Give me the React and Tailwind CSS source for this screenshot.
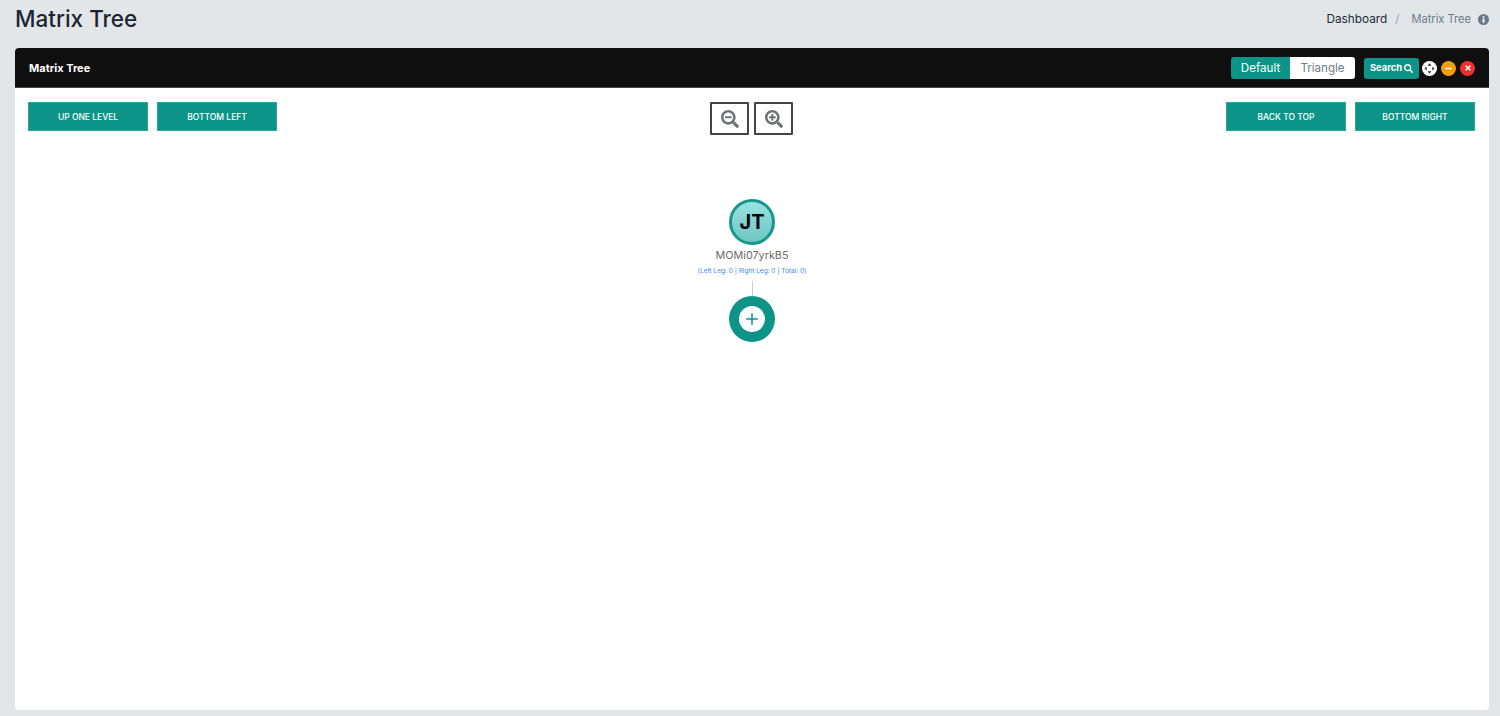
import { FaSearch, FaSearchMinus, FaSearchPlus, FaTimes, FaMinus } from "react-icons/fa";
import { Plus } from "lucide-react";

const font = "font-['Inter','Noto_Sans',sans-serif]";

function ActionButton({ label }) {
  return (
    <button className="flex h-[29px] w-[120px] items-center justify-center border border-[#2ba797] bg-[#0d9488] pt-[1px] text-[8.5px] font-medium text-white">
      {label}
    </button>
  );
}

function ZoomButton({ children }) {
  return (
    <button className="flex h-[33px] w-[39px] items-center justify-center rounded-[1px] border-2 border-[#444] bg-white text-[#6f7378]">
      {children}
    </button>
  );
}

function InfoDot() {
  return (
    <svg viewBox="0 0 12 12" className="ml-[7px] h-[11px] w-[11px]">
      <circle cx="6" cy="6" r="6" fill="#6b7686" />
      <rect x="5" y="5" width="2" height="4.5" fill="#fff" />
      <rect x="5" y="2.5" width="2" height="1.6" fill="#fff" />
    </svg>
  );
}

function ExpandDots() {
  return (
    <svg viewBox="0 0 16 16" className="h-[15px] w-[15px]">
      <circle cx="8" cy="8" r="8" fill="#fff" />
      <path d="M8 2.5 10 5H6zM8 13.5 6 11h4zM2.5 8 5 6v4zM13.5 8 11 10V6z" fill="#1f2a37" />
    </svg>
  );
}

function Header() {
  return (
    <div className="flex h-[48px] items-start justify-between pl-[15px] pr-[11px]">
      <h1 className="pt-[3px] text-[22.5px] leading-[32px] font-medium text-[#1c2433]">Matrix Tree</h1>
      <div className="flex items-center pt-[12px] leading-[14px]">
        <span className="text-[11.8px] text-[#222b38]">Dashboard</span>
        <span className="ml-[8px] mr-[12px] text-[11.5px] text-[#9aa1ab]">/</span>
        <span className="text-[11.1px] text-[#6e7a88]">Matrix Tree</span>
        <InfoDot />
      </div>
    </div>
  );
}

function CardHeader() {
  return (
    <div className="flex h-[40px] items-center justify-between rounded-t-[4px] border-b border-[#444] bg-[#0f0f0f] px-[14px] pt-[1px]">
      <span className="text-[11px] font-bold text-white">Matrix Tree</span>
      <div className="flex items-center">
        <div className="flex h-[22px] overflow-hidden rounded-[3px] text-[11.6px]">
          <span className="flex w-[59px] items-center justify-center bg-[#0d9488] pt-[1px] text-white">Default</span>
          <span className="flex w-[65px] items-center justify-center bg-white pt-[1px] text-[#6f7a88]">Triangle</span>
        </div>
        <button className="ml-[9px] flex h-[21px] w-[55px] items-center justify-center gap-[2px] rounded-[3px] bg-[#0d9488] text-[9.4px] font-bold text-white">
          Search
          <FaSearch className="h-[9px] w-[9px]" />
        </button>
        <div className="ml-[3px] flex items-center gap-[4px]">
          <ExpandDots />
          <span className="flex h-[15px] w-[15px] items-center justify-center rounded-full bg-[#f59e0b] text-white">
            <FaMinus className="h-[7px] w-[7px]" />
          </span>
          <span className="flex h-[15px] w-[15px] items-center justify-center rounded-full bg-[#f03030] text-white">
            <FaTimes className="h-[8px] w-[8px]" />
          </span>
        </div>
      </div>
    </div>
  );
}

function Toolbar() {
  return (
    <div className="flex items-start justify-between pl-[13px] pr-[14px] pt-[14px]">
      <div className="flex gap-[9px]">
        <ActionButton label="UP ONE LEVEL" />
        <ActionButton label="BOTTOM LEFT" />
      </div>
      <div className="flex gap-[5px]">
        <ZoomButton>
          <FaSearchMinus className="h-[18px] w-[18px]" />
        </ZoomButton>
        <ZoomButton>
          <FaSearchPlus className="h-[18px] w-[18px]" />
        </ZoomButton>
      </div>
      <div className="flex gap-[9px]">
        <ActionButton label="BACK TO TOP" />
        <ActionButton label="BOTTOM RIGHT" />
      </div>
    </div>
  );
}

function TreeNode() {
  return (
    <div className="flex flex-col items-center pt-[64px]">
      <div className="flex h-[46px] w-[46px] items-center justify-center rounded-full border-[3px] border-[#17978a] bg-gradient-to-b from-[#9ae2e2] to-[#6dc6c3] text-[20px] font-bold text-[#0a0a0a]">
        JT
      </div>
      <div className="mt-[3px] text-[10.8px] leading-[16px] text-[#6b6b6b]">MOMi07yrkB5</div>
      <div className="mt-[1px] text-[6.5px] leading-[12px] text-[#3b8eea]">(Left Leg: 0 | Right Leg: 0 | Total: 0)</div>
      <div className="mt-[4px] h-[15px] w-px bg-[#ccc]" />
      <div className="flex h-[46px] w-[46px] items-center justify-center rounded-full bg-[#0d9488]">
        <span className="flex h-[26px] w-[26px] items-center justify-center rounded-full bg-white text-[#0d9488]">
          <Plus className="h-[18px] w-[18px]" strokeWidth={2} />
        </span>
      </div>
    </div>
  );
}

export default function App() {
  return (
    <div className={`${font} flex h-[716px] flex-col overflow-hidden bg-[#e2e6e8]`}>
      <Header />
      <div className="ml-[15px] mr-[11px] flex h-[662px] flex-col rounded-[4px] bg-white">
        <CardHeader />
        <Toolbar />
        <TreeNode />
      </div>
    </div>
  );
}
